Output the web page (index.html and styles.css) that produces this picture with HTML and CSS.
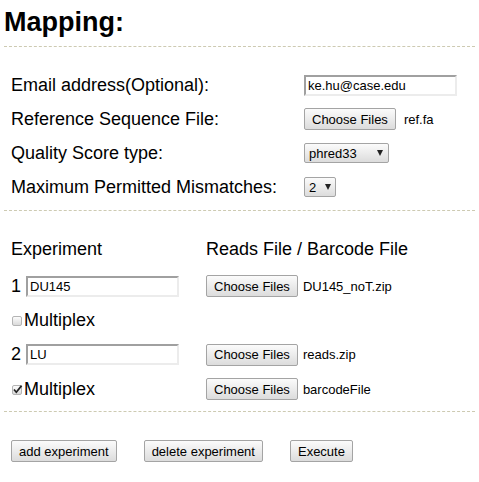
FILE: index.html
```html
<!DOCTYPE html>
<html lang="en">
<head>
<meta charset="utf-8">
<title>Mapping</title>
<link rel="stylesheet" href="styles.css">
</head>
<body>
<div class="page">
  <h1 class="title">Mapping:</h1>

  <section class="settings">
    <label class="lbl" for="email">Email address(Optional):</label>
    <div class="ctl"><input id="email" class="text-in" type="text" value="ke.hu@case.edu"></div>

    <span class="lbl">Reference Sequence File:</span>
    <div class="ctl file"><button class="btn" type="button">Choose Files</button><span class="fname fname-wide">ref.fa</span></div>

    <label class="lbl" for="qs">Quality Score type:</label>
    <div class="ctl"><span class="sel sel-wide"><select id="qs"><option>phred33</option><option>phred64</option></select></span></div>

    <label class="lbl" for="mm">Maximum Permitted Mismatches:</label>
    <div class="ctl"><span class="sel sel-narrow"><select id="mm"><option>2</option><option>0</option><option>1</option><option>3</option></select></span></div>
  </section>

  <section class="experiments">
    <div class="head">Experiment</div>
    <div class="head">Reads File / Barcode File</div>

    <div class="exp-name"><span class="num">1</span><input class="text-in" type="text" value="DU145"></div>
    <div class="ctl file"><button class="btn" type="button">Choose Files</button><span class="fname">DU145_noT.zip</span></div>

    <label class="mp"><span class="cb"></span>Multiplex</label>
    <div></div>

    <div class="exp-name"><span class="num">2</span><input class="text-in" type="text" value="LU"></div>
    <div class="ctl file"><button class="btn" type="button">Choose Files</button><span class="fname">reads.zip</span></div>

    <label class="mp"><span class="cb cb-on"><svg width="11" height="11" viewBox="0 0 11 11"><path d="M2 5.5 L4.3 8.2 L9.6 1.6" fill="none" stroke="#222" stroke-width="1.7"/></svg></span>Multiplex</label>
    <div class="ctl file"><button class="btn" type="button">Choose Files</button><span class="fname">barcodeFile</span></div>
  </section>

  <div class="actions">
    <button class="btn" type="button">add experiment</button>
    <button class="btn" type="button">delete experiment</button>
    <button class="btn" type="button">Execute</button>
  </div>
</div>
</body>
</html>
```

FILE: styles.css
```css
* { box-sizing: border-box; }

body {
  margin: 0;
  background: #fff;
  color: #000;
  font-family: "Liberation Sans", Arial, sans-serif;
}

.page {
  padding: 0 4px;
}

.title {
  margin: 0;
  padding: 7px 0 8px;
  font-size: 27px;
  line-height: 31px;
  font-weight: bold;
  border-bottom: 1px dashed #cdcab2;
}

.settings {
  display: grid;
  grid-template-columns: 293px 1fr;
  grid-auto-rows: 34px;
  align-items: center;
  padding: 21px 7px 6px;
  border-bottom: 1px dashed #cdcab2;
}

.lbl {
  font-size: 18px;
}

.ctl {
  display: flex;
  align-items: center;
}

.text-in {
  width: 153px;
  height: 21px;
  margin: 0;
  padding: 0 2px;
  font-family: "Liberation Sans", Arial, sans-serif;
  font-size: 13px;
  color: #000;
  background: #fff;
  border-style: solid;
  border-width: 2px;
  border-color: #a0a0a0 #ececec #ececec #a0a0a0;
  outline: none;
}

.btn {
  height: 22px;
  margin: 0;
  padding: 0 7px;
  font-family: "Liberation Sans", Arial, sans-serif;
  font-size: 13px;
  color: #000;
  border: 1px solid #a4a4a4;
  border-radius: 2px;
  background: linear-gradient(#fbfbfb, #dcdcdc);
}

.fname {
  margin-left: 5px;
  font-size: 13px;
}

.fname-wide {
  margin-left: 8px;
}

.sel {
  position: relative;
  display: inline-block;
  height: 20px;
}

.sel select {
  appearance: none;
  -webkit-appearance: none;
  width: 100%;
  height: 20px;
  margin: 0;
  padding: 0 0 0 4px;
  font-family: "Liberation Sans", Arial, sans-serif;
  font-size: 13px;
  color: #000;
  border: 1px solid #a4a4a4;
  border-radius: 2px;
  background: linear-gradient(#fbfbfb, #dcdcdc);
  outline: none;
}

.sel::after {
  content: "";
  position: absolute;
  top: 7px;
  right: 6px;
  border-left: 3px solid transparent;
  border-right: 3px solid transparent;
  border-top: 6px solid #222;
  pointer-events: none;
}

.sel-wide { width: 85px; }
.sel-narrow { width: 32px; }
.sel-narrow::after { right: 5px; }

.experiments {
  display: grid;
  grid-template-columns: 195px 1fr;
  grid-template-rows: 27px 24px 24px 25px 24px;
  row-gap: 10px;
  align-items: center;
  padding: 26px 7px 10px;
  border-bottom: 1px dashed #cdcab2;
}

.head {
  align-self: start;
  font-size: 18px;
  line-height: 24px;
}

.exp-name {
  display: flex;
  align-items: center;
  gap: 5px;
}

.num {
  font-size: 18px;
  width: 10px;
}

.mp {
  font-size: 18px;
  line-height: 24px;
}

.cb {
  display: inline-block;
  width: 10px;
  height: 10px;
  margin: 0 2px 0 1px;
  vertical-align: baseline;
  border: 1px solid #b4b4b4;
  border-radius: 2px;
  background: linear-gradient(#fcfcfc, #dadada);
  position: relative;
}

.cb-on svg {
  position: absolute;
  left: -1px;
  top: -2px;
}

.actions {
  display: flex;
  gap: 27px;
  padding: 28px 7px 0;
}
```
